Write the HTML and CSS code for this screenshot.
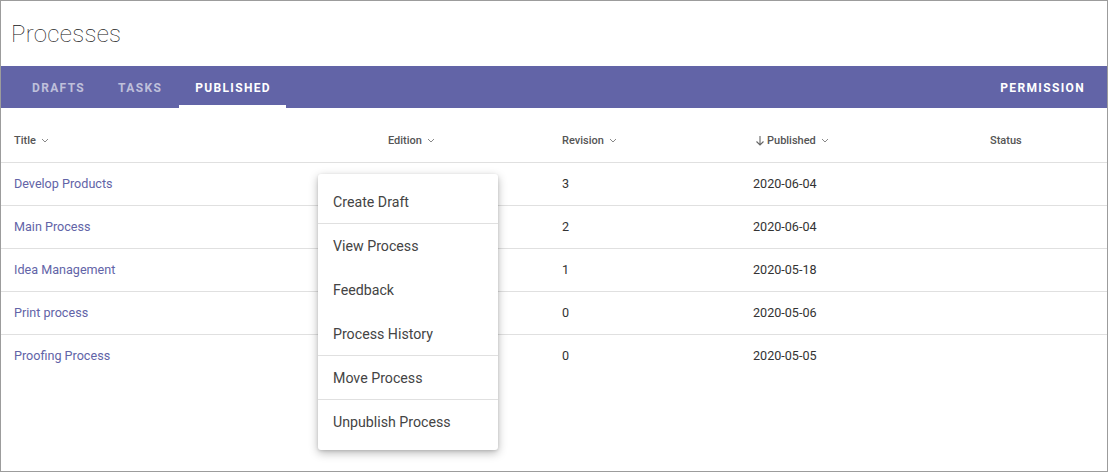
FILE: index.html
```html
<!DOCTYPE html>
<html>
<head>
<meta charset="utf-8">
<link rel="stylesheet" href="styles.css">
</head>
<body>
<div class="frame">
  <header class="page-head"><h1 class="page-title">Processes</h1></header>
  <nav class="tabbar">
    <div class="tabs">
      <span class="tab">Drafts</span>
      <span class="tab">Tasks</span>
      <span class="tab active">Published</span>
    </div>
    <span class="tab perm">Permission</span>
  </nav>
  <div class="table">
    <div class="row head">
      <div class="cell">Title <svg class="chev" viewBox="0 0 8 5"><path d="M1 1l3 3 3-3" /></svg></div>
      <div class="cell">Edition <svg class="chev" viewBox="0 0 8 5"><path d="M1 1l3 3 3-3" /></svg></div>
      <div class="cell">Revision <svg class="chev" viewBox="0 0 8 5"><path d="M1 1l3 3 3-3" /></svg></div>
      <div class="cell"><svg class="arrow" viewBox="0 0 10 11"><path d="M5 1v9M1.5 6.5L5 10l3.5-3.5" /></svg>Published <svg class="chev" viewBox="0 0 8 5"><path d="M1 1l3 3 3-3" /></svg></div>
      <div class="cell">Status</div>
    </div>
    <div class="row"><div class="cell link">Develop Products</div><div class="cell"></div><div class="cell">3</div><div class="cell">2020-06-04</div><div class="cell"></div></div>
    <div class="row"><div class="cell link">Main Process</div><div class="cell"></div><div class="cell">2</div><div class="cell">2020-06-04</div><div class="cell"></div></div>
    <div class="row"><div class="cell link">Idea Management</div><div class="cell"></div><div class="cell">1</div><div class="cell">2020-05-18</div><div class="cell"></div></div>
    <div class="row"><div class="cell link">Print process</div><div class="cell"></div><div class="cell">0</div><div class="cell">2020-05-06</div><div class="cell"></div></div>
    <div class="row"><div class="cell link">Proofing Process</div><div class="cell"></div><div class="cell">0</div><div class="cell">2020-05-05</div><div class="cell"></div></div>
  </div>
  <ul class="menu">
    <li class="item sep">Create Draft</li>
    <li class="item">View Process</li>
    <li class="item">Feedback</li>
    <li class="item sep">Process History</li>
    <li class="item sep">Move Process</li>
    <li class="item">Unpublish Process</li>
  </ul>
</div>
</body>
</html>
```
FILE: styles.css
```css
* { box-sizing: border-box; }
html, body { margin: 0; padding: 0; background: #fff; }
body { font-family: Roboto, "Noto Sans", sans-serif; color: #333; }

.frame {
  position: relative;
  width: 1108px;
  height: 472px;
  border: 1px solid #9c9c9c;
  overflow: hidden;
}

.page-head {
  height: 65px;
  padding-left: 10px;
  display: flex;
  align-items: center;
}
.page-title {
  margin: 0;
  font-size: 24px;
  font-weight: 100;
  color: #111;
  letter-spacing: 0.3px;
}

.tabbar {
  height: 42px;
  background: #6264a7;
  display: flex;
  justify-content: space-between;
  align-items: stretch;
  padding: 0 8px 0 15px;
}
.tabs { display: flex; }
.tab {
  display: flex;
  align-items: center;
  padding: 4px 17px 0 16px;
  font-size: 12px;
  font-weight: 700;
  letter-spacing: 1.35px;
  text-transform: uppercase;
  color: rgba(255,255,255,0.6);
  border-bottom: 3px solid transparent;
}
.tab.active { color: #fff; border-bottom-color: #fff; padding-right: 15px; }
.tab.perm { color: #fff; padding-right: 14px; }

.table { display: flex; flex-direction: column; }
.row {
  display: grid;
  grid-template-columns: 374px 174px 191px 237px 1fr;
  height: 43px;
  align-items: center;
  padding-left: 13px;
  padding-bottom: 2px;
  border-bottom: 1px solid #e0e0e0;
  font-size: 12.6px;
  color: #333;
}
.row:last-child { border-bottom-color: transparent; }
.row.head {
  height: 55px;
  font-size: 11px;
  font-weight: 500;
  color: #555;
  padding-top: 12px;
  padding-bottom: 2px;
}
.cell { display: flex; align-items: center; white-space: nowrap; }
.link { color: #6264a7; }
.chev {
  width: 8px; height: 5px;
  margin-left: 5px;
  fill: none; stroke: #888; stroke-width: 1;
}
.arrow {
  width: 10px; height: 11px;
  margin-left: 2px;
  margin-right: 2px;
  fill: none; stroke: #666; stroke-width: 1.1;
}

.menu {
  position: absolute;
  left: 317px;
  top: 173px;
  width: 180px;
  margin: 0;
  padding: 6px 0;
  list-style: none;
  background: #fff;
  border-radius: 3px;
  box-shadow: 0 3px 10px rgba(0,0,0,0.28), 0 1px 3px rgba(0,0,0,0.12);
}
.item {
  height: 44px;
  display: flex;
  align-items: center;
  padding-left: 15px;
  font-size: 14.2px;
  color: #444;
}
.item.sep { border-bottom: 1px solid #e0e0e0; }
```
